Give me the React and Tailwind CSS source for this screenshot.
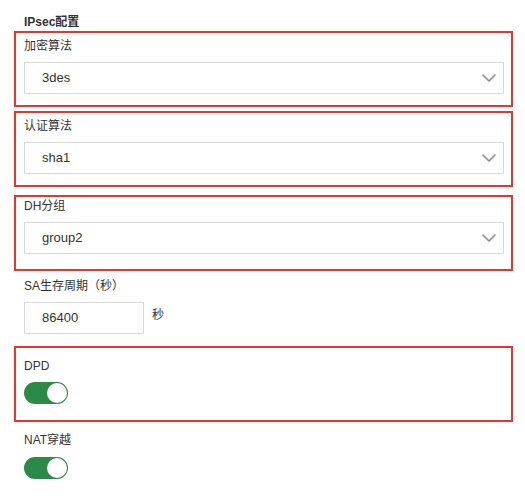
const font = { fontFamily: '"Liberation Sans", "Noto Sans CJK SC", sans-serif' }

function Chevron() {
  return (
    <svg width="14" height="8" viewBox="0 0 14 8" fill="none" className="text-[#8c8c8c]">
      <polyline points="1,1 7,7 13,1" stroke="currentColor" strokeWidth="1.6" strokeLinecap="round" strokeLinejoin="round" />
    </svg>
  )
}

function Select({ value }) {
  return (
    <div className="mt-[6px] flex h-[32px] w-[480px] items-center justify-between border border-[#d9d9d9] bg-white pl-[17px] pr-[7px]">
      <span className="text-[13px] text-[#333]">{value}</span>
      <Chevron />
    </div>
  )
}

function Toggle({ className }) {
  return (
    <div className={`flex h-[22px] w-[44px] items-center justify-end rounded-full bg-[#2c8a48] p-[1px] ${className}`}>
      <div className="h-[20px] w-[20px] rounded-full bg-white" />
    </div>
  )
}

// red annotation frames sit over the form
const frames = [31, 111, 195, 346]

export default function App() {
  return (
    <div className="relative h-[497px] w-[525px] overflow-hidden bg-white px-[24px] pt-[12px] text-[12px] text-[#333]" style={font}>
      <div className="text-[12px] font-bold leading-[20px] text-[#333]">IPsec配置</div>

      <div className="mt-[4px] flex flex-col">
        <div className="leading-[20px]">加密算法</div>
        <Select value="3des" />

        <div className="mt-[22px] leading-[20px]">认证算法</div>
        <Select value="sha1" />

        <div className="mt-[22px] leading-[20px]">DH分组</div>
        <Select value="group2" />

        <div className="mt-[22px] leading-[20px]">SA生存周期（秒）</div>
        <div className="mt-[6px] flex items-center">
          <div className="flex h-[32px] w-[120px] items-center border border-[#d9d9d9] pl-[17px] text-[13px]">86400</div>
          <span className="ml-[8px] -mt-[6px]">秒</span>
        </div>

        <div className="mt-[22px] leading-[20px]">DPD</div>
        <Toggle className="mt-[6px]" />

        <div className="mt-[26px] leading-[20px]">NAT穿越</div>
        <Toggle className="mt-[7px]" />
      </div>

      {frames.map((top) => (
        <div
          key={top}
          className="pointer-events-none absolute left-[14px] h-[76px] w-[499px] border-2 border-[#f2322a]"
          style={{ top }}
        />
      ))}
    </div>
  )
}
